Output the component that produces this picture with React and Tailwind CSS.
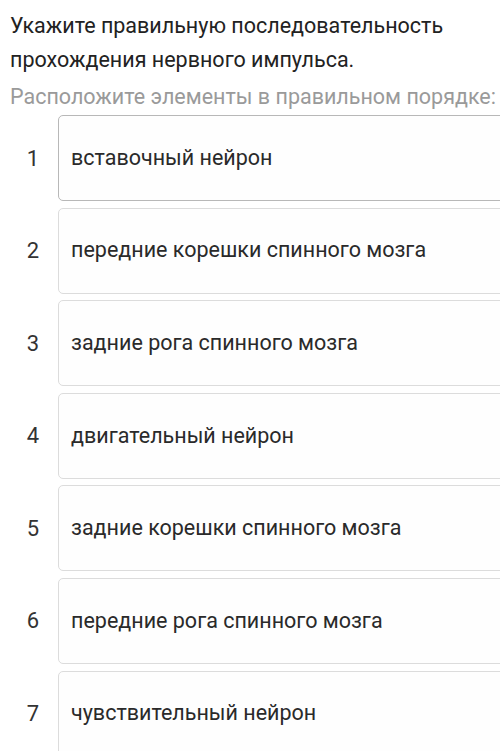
export default function App() {
  const items = [
    'вставочный нейрон',
    'передние корешки спинного мозга',
    'задние рога спинного мозга',
    'двигательный нейрон',
    'задние корешки спинного мозга',
    'передние рога спинного мозга',
    'чувствительный нейрон',
  ];

  return (
    <div
      className="w-[500px] h-[751px] overflow-hidden bg-white"
      style={{ fontFamily: 'Roboto, "Noto Sans", sans-serif' }}
    >
      <div className="pl-[10px] pt-[9px]">
        <h1 className="text-[21.5px] leading-[34px] text-[#222]">
          Укажите правильную последовательность прохождения нервного импульса.
        </h1>
        <p className="mt-[3px] text-[21.5px] leading-[34px] text-[#9a9a9a] whitespace-nowrap">
          Расположите элементы в правильном порядке:
        </p>
      </div>

      <div className="mt-[1px] flex flex-col gap-[6.6px]">
        {items.map((text, i) => (
          <div key={i} className="flex items-center">
            <div className="w-[58px] shrink-0 pl-[8px] text-center text-[22px] text-[#333]">
              {i + 1}
            </div>
            <div
              className={
                'h-[86px] w-[460px] shrink-0 flex items-center pl-[12px] rounded-[5px] border bg-[#fefefe] text-[21.5px] text-[#2a2a2a] ' +
                (i === 0 ? 'border-[#b8b8b8]' : 'border-[#dcdcdc]')
              }
            >
              {text}
            </div>
          </div>
        ))}
      </div>
    </div>
  );
}
